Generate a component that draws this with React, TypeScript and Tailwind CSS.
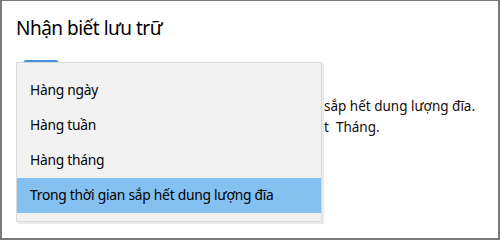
import React from "react";

export default function App() {
  const items = ["Hàng ngày", "Hàng tuần", "Hàng tháng", "Trong thời gian sắp hết dung lượng đĩa"];
  return (
    <div
      className="relative w-[500px] h-[240px] bg-white border-t border-l-2 border-r-2 border-b-2 border-[#7a7a7a] overflow-hidden text-[#1b1b1b]"
      style={{ fontFamily: '"Noto Sans", "Open Sans", sans-serif' }}
    >
      <div className="pl-[14px] pt-[14px] text-[19px] leading-[26px] tracking-[-0.5px] text-black">Nhận biết lưu trữ</div>
      <div className="absolute left-[21px] top-[59px] w-[36px] h-[8px] rounded-[4px] border-2 border-[#4a90d9]" />
      <div className="pt-[55px] pl-[322px] text-[13.5px] leading-[21px] text-[#1a0a0a]">
        <div>sắp hết dung lượng đĩa.</div>
        <div>t&nbsp; Tháng.</div>
      </div>
      <div className="absolute left-[14px] top-[61px] w-[306px] pt-[10px] pb-[8px] bg-[#f2f2f2] border border-[#dadada] shadow-[2px_2px_1px_rgba(0,0,0,0.08)]">
        {items.map((t, i) => (
          <div
            key={t}
            className={`h-[35px] flex items-center pl-[13px] text-[13.8px] tracking-[-0.25px] text-black ${i === 3 ? "bg-[#84c0f0]" : ""}`}
          >
            {t}
          </div>
        ))}
      </div>
    </div>
  );
}
